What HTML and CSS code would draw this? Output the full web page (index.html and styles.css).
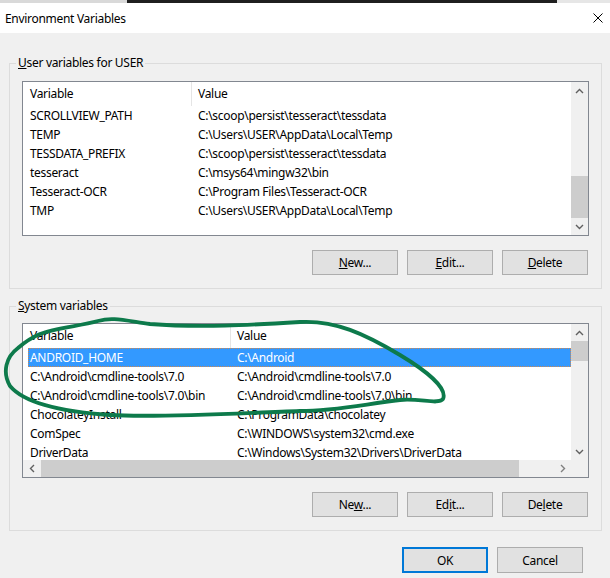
FILE: index.html
```html
<!DOCTYPE html>
<html lang="en">
<head>
    <meta charset="UTF-8" />
    <meta name="viewport" content="width=device-width, initial-scale=1.0"/>
    <title>Environment Variables</title>
    <link rel="stylesheet" href="styles.css">
</head>
<body>
<div class="backdrop">
    <div class="backdrop-left"></div>
    <div class="backdrop-dark"></div>
    <div class="backdrop-right"></div>
</div>

<div class="titlebar">
    <span class="title">Environment Variables</span>
    <button class="close" aria-label="Close">
        <svg width="10" height="10" viewBox="0 0 10 10"><path d="M0.5 0.5L9.5 9.5M9.5 0.5L0.5 9.5" stroke="#000" stroke-width="1"/></svg>
    </button>
</div>

<div class="dialog">
    <fieldset class="group">
        <legend><u>U</u>ser variables for USER</legend>
        <div class="list list-user">
            <div class="list-main">
                <div class="list-rows">
                    <div class="row head"><span>Variable</span><span>Value</span></div>
                    <div class="row"><span>SCROLLVIEW_PATH</span><span>C:\scoop\persist\tesseract\tessdata</span></div>
                    <div class="row"><span>TEMP</span><span>C:\Users\USER\AppData\Local\Temp</span></div>
                    <div class="row"><span>TESSDATA_PREFIX</span><span>C:\scoop\persist\tesseract\tessdata</span></div>
                    <div class="row"><span>tesseract</span><span>C:\msys64\mingw32\bin</span></div>
                    <div class="row"><span>Tesseract-OCR</span><span>C:\Program Files\Tesseract-OCR</span></div>
                    <div class="row"><span>TMP</span><span>C:\Users\USER\AppData\Local\Temp</span></div>
                </div>
                <div class="vscroll">
                    <span class="sb-btn"><svg width="9" height="6" viewBox="0 0 9 6"><path d="M1 5L4.5 1.5L8 5" fill="none" stroke="#606060" stroke-width="1.4"/></svg></span>
                    <span class="sb-track"></span>
                    <span class="sb-thumb user-thumb"></span>
                    <span class="sb-btn"><svg width="9" height="6" viewBox="0 0 9 6"><path d="M1 1L4.5 4.5L8 1" fill="none" stroke="#606060" stroke-width="1.4"/></svg></span>
                </div>
            </div>
        </div>
        <div class="actions">
            <button class="btn"><u>N</u>ew...</button>
            <button class="btn"><u>E</u>dit...</button>
            <button class="btn"><u>D</u>elete</button>
        </div>
    </fieldset>

    <fieldset class="group group-sys">
        <legend><u>S</u>ystem variables</legend>
        <div class="list list-sys">
            <div class="list-main">
                <div class="list-rows">
                    <div class="row head"><span>Variable</span><span>Value</span></div>
                    <div class="row selected"><span>ANDROID_HOME</span><span>C:\Android</span></div>
                    <div class="row"><span>C:\Android\cmdline-tools\7.0</span><span>C:\Android\cmdline-tools\7.0</span></div>
                    <div class="row"><span>C:\Android\cmdline-tools\7.0\bin</span><span>C:\Android\cmdline-tools\7.0\bin</span></div>
                    <div class="row"><span>ChocolateyInstall</span><span>C:\ProgramData\chocolatey</span></div>
                    <div class="row"><span>ComSpec</span><span>C:\WINDOWS\system32\cmd.exe</span></div>
                    <div class="row"><span>DriverData</span><span>C:\Windows\System32\Drivers\DriverData</span></div>
                </div>
                <div class="vscroll">
                    <span class="sb-btn"><svg width="9" height="6" viewBox="0 0 9 6"><path d="M1 5L4.5 1.5L8 5" fill="none" stroke="#606060" stroke-width="1.4"/></svg></span>
                    <span class="sb-thumb sys-thumb"></span>
                    <span class="sb-track"></span>
                    <span class="sb-btn"><svg width="9" height="6" viewBox="0 0 9 6"><path d="M1 1L4.5 4.5L8 1" fill="none" stroke="#606060" stroke-width="1.4"/></svg></span>
                </div>
            </div>
            <div class="hscroll">
                <span class="sb-btn"><svg width="6" height="9" viewBox="0 0 6 9"><path d="M5 1L1.5 4.5L5 8" fill="none" stroke="#606060" stroke-width="1.4"/></svg></span>
                <span class="sb-thumb h-thumb"></span>
                <span class="sb-track"></span>
                <span class="sb-btn"><svg width="6" height="9" viewBox="0 0 6 9"><path d="M1 1L4.5 4.5L1 8" fill="none" stroke="#808080" stroke-width="1.4"/></svg></span>
                <span class="corner"></span>
            </div>
        </div>
        <div class="actions">
            <button class="btn">Ne<u>w</u>...</button>
            <button class="btn">Ed<u>i</u>t...</button>
            <button class="btn">De<u>l</u>ete</button>
        </div>
    </fieldset>

    <div class="footer">
        <button class="btn btn-default">OK</button>
        <button class="btn">Cancel</button>
    </div>
</div>

<!-- hand-drawn marker loop around the Android entries -->
<svg class="marker" width="610" height="578" viewBox="0 0 610 578">
    <path d="M40 334 C55 328 80 326 98 321 C112 317 122 320 150 324 C200 328 250 325 300 322 C335 320 365 334 400 355 C425 370 448 388 443 399 C438 405 420 398 400 400 C365 404 335 411 300 411 C240 413 160 418 110 415 C65 412 25 404 10 386 C2 372 6 357 18 348 C26 341 33 337 40 334"
          fill="none" stroke="#0d7a4b" stroke-width="3.8" stroke-linecap="round" stroke-linejoin="round"/>
</svg>
</body>
</html>
```

FILE: styles.css
```css
body {
    margin: 0;
    width: 610px;
    height: 578px;
    overflow: hidden;
    position: relative;
    background-color: #f0f0f0;
    font-family: 'Segoe UI', 'Noto Sans', sans-serif;
    font-size: 12px;
    letter-spacing: -0.3px;
    color: #000;
}

/* sliver of the window behind the dialog */
.backdrop {
    display: flex;
    height: 3px;
}

.backdrop-left {
    width: 127px;
    background-color: #d9d9d9;
}

.backdrop-dark {
    width: 430px;
    background-color: #1f1f1f;
}

.backdrop-right {
    flex: 1;
    background-color: #e6e6e6;
}

.titlebar {
    height: 30px;
    background-color: white;
    display: flex;
    align-items: center;
    justify-content: space-between;
    padding: 0 7px 0 5px;
}

.close {
    border: none;
    background: none;
    padding: 0;
    display: flex;
}

.dialog {
    padding: 22px 8px 0 9px;
}

.group {
    margin: 0;
    min-width: 0;
    border: 1px solid #dcdcdc;
    padding: 10px 12px 13px;
}

.group-sys {
    margin-top: 9px;
    padding-top: 9px;
}

legend {
    padding: 0 2px;
    margin-left: -6px;
    line-height: 16px;
}

/* list views */
.list {
    height: 155px;
    box-sizing: border-box;
    border: 1px solid #828790;
    background-color: white;
    display: flex;
    flex-direction: column;
}

.list-user {
    --name-col: 163px;
}

.list-sys {
    --name-col: 202px;
}

.list-main {
    flex: 1;
    min-height: 0;
    display: flex;
}

.list-rows {
    flex: 1;
    min-width: 0;
    overflow: hidden;
}

.row {
    display: grid;
    grid-template-columns: var(--name-col) minmax(0, 1fr);
    height: 19px;
    line-height: 19px;
    margin-left: 5px;
    white-space: nowrap;
}

.row span {
    padding-left: 2px;
}

.row span + span {
    padding-left: 7px;
}

.row.head {
    height: 24px;
    line-height: 24px;
}

.row.head span + span {
    border-left: 1px solid #e5e5e5;
    padding-left: 6px;
}

.row.selected {
    background-color: #3399ff;
    color: white;
    outline: 1px dotted #d08850;
    outline-offset: -1px;
}

/* scrollbars */
.vscroll {
    width: 17px;
    flex: none;
    background-color: #f0f0f0;
    display: flex;
    flex-direction: column;
}

.hscroll {
    height: 17px;
    flex: none;
    background-color: #f0f0f0;
    display: flex;
}

.sb-btn {
    flex: none;
    width: 17px;
    height: 17px;
    display: flex;
    align-items: center;
    justify-content: center;
}

.sb-track {
    flex: 1;
}

.sb-thumb {
    flex: none;
    background-color: #cdcdcd;
}

.user-thumb {
    height: 42px;
}

.sys-thumb {
    height: 20px;
}

.h-thumb {
    width: 478px;
    margin-left: 1px;
}

.corner {
    width: 17px;
    flex: none;
}

/* buttons */
.actions {
    display: flex;
    justify-content: flex-end;
    gap: 9px;
    margin-top: 14px;
    padding-right: 1px;
}

.footer {
    display: flex;
    justify-content: flex-end;
    gap: 9px;
    margin-top: 16px;
    padding-right: 19px;
}

.btn {
    width: 86px;
    height: 25px;
    box-sizing: border-box;
    border: 1px solid #adadad;
    background-color: #e1e1e1;
    font: inherit;
    letter-spacing: inherit;
    color: #000;
    padding: 0;
}

.footer .btn {
    height: 26px;
}

.btn-default {
    border: 2px solid #0078d7;
}

.marker {
    position: absolute;
    top: 0;
    left: 0;
    pointer-events: none;
}
```
